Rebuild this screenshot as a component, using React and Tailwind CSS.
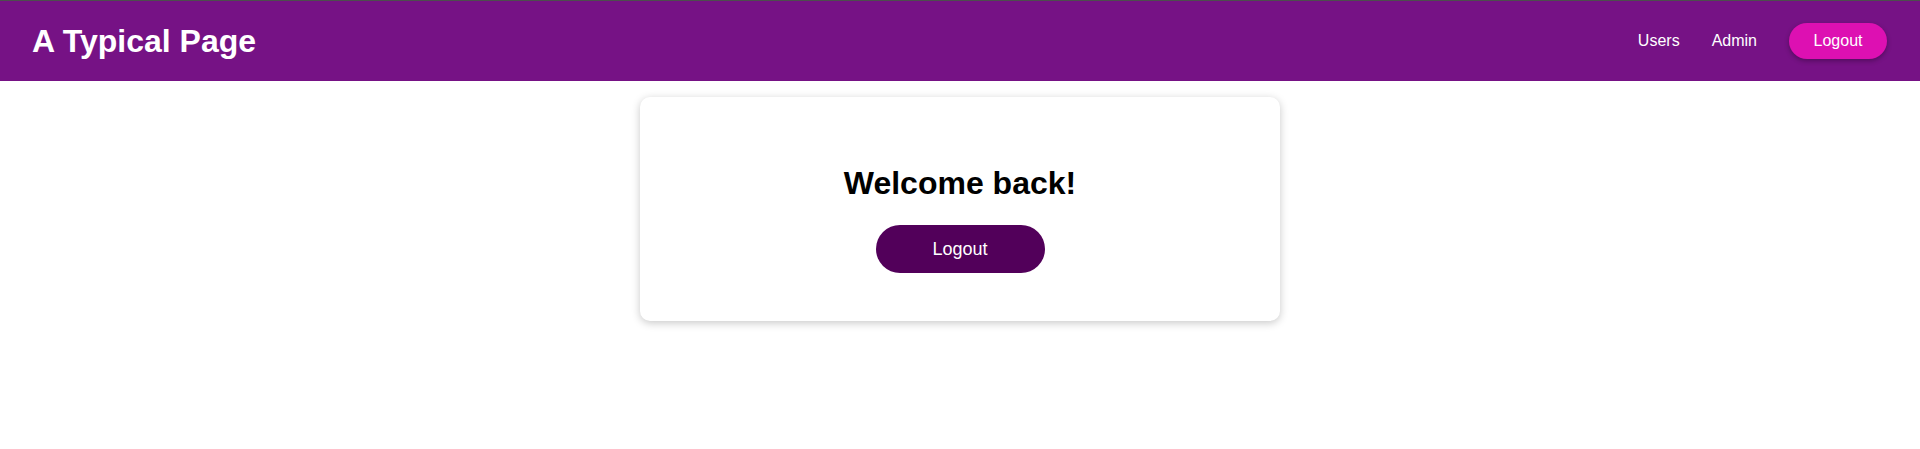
import React from 'react';

const FONT = { fontFamily: '"Liberation Sans", Arial, sans-serif' };

function Header() {
    return (
        <header className="h-[81px] bg-[#761285] border-t border-[#4d4d4d] flex items-center justify-between pl-8 pr-[33px] text-white">
            <h1 className="text-[32px] font-bold leading-none">A Typical Page</h1>
            <nav className="flex items-center gap-8 text-base">
                <a href="#" className="text-white">Users</a>
                <a href="#" className="text-white">Admin</a>
                <button className="w-[98px] h-9 rounded-full bg-[#dd10b2] text-white shadow-[0_2px_5px_rgba(0,0,0,0.3)]">
                    Logout
                </button>
            </nav>
        </header>
    );
}

export default function App() {
    return (
        <div className="min-h-screen bg-white" style={FONT}>
            <Header />
            <main className="pt-4">
                <div className="mx-auto w-[640px] h-[224px] bg-white rounded-[10px] shadow-[0_2px_8px_rgba(0,0,0,0.22)] pt-[68px] flex flex-col items-center">
                    <h2 className="text-[32px] font-bold text-black leading-[37px]">Welcome back!</h2>
                    <button className="mt-[23px] w-[169px] h-12 rounded-full bg-[#52005a] text-white text-lg">
                        Logout
                    </button>
                </div>
            </main>
        </div>
    );
}
